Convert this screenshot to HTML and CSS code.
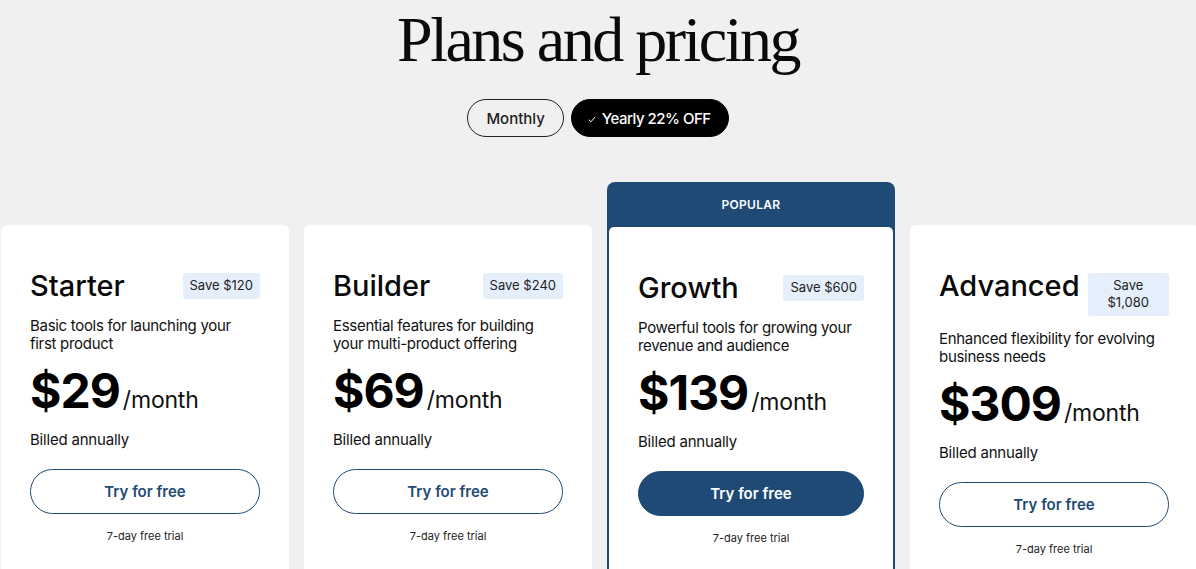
FILE: index.html
```html
<!DOCTYPE html>
<html lang="en">
<head>
<meta charset="utf-8">
<title>Plans and pricing</title>
<link rel="stylesheet" href="styles.css">
</head>
<body>
<main class="page">
  <h1 class="title">Plans and pricing</h1>
  <div class="toggle">
    <button class="toggle-btn">Monthly</button>
    <button class="toggle-btn active"><svg class="check" width="8" height="7" viewBox="0 0 8 7"><path d="M0.8 3.6 L2.9 5.8 L7.2 0.9" fill="none" stroke="#fff" stroke-width="1"/></svg>Yearly 22% OFF</button>
  </div>
  <div class="plans">
    <section class="plan">
      <div class="plan-body">
        <div class="plan-head"><h2>Starter</h2><span class="badge">Save $120</span></div>
        <p class="desc">Basic tools for launching your first product</p>
        <div class="price"><span class="amount">$29</span><span class="per">/month</span></div>
        <p class="billed">Billed annually</p>
        <a class="cta" href="#">Try for free</a>
        <p class="trial">7-day free trial</p>
      </div>
    </section>
    <section class="plan">
      <div class="plan-body">
        <div class="plan-head"><h2>Builder</h2><span class="badge">Save $240</span></div>
        <p class="desc">Essential features for building your multi-product offering</p>
        <div class="price"><span class="amount">$69</span><span class="per">/month</span></div>
        <p class="billed">Billed annually</p>
        <a class="cta" href="#">Try for free</a>
        <p class="trial">7-day free trial</p>
      </div>
    </section>
    <section class="plan popular">
      <div class="popular-tag">POPULAR</div>
      <div class="plan-body">
        <div class="plan-head"><h2>Growth</h2><span class="badge">Save $600</span></div>
        <p class="desc">Powerful tools for growing your revenue and audience</p>
        <div class="price"><span class="amount">$139</span><span class="per">/month</span></div>
        <p class="billed">Billed annually</p>
        <a class="cta" href="#">Try for free</a>
        <p class="trial">7-day free trial</p>
      </div>
    </section>
    <section class="plan">
      <div class="plan-body">
        <div class="plan-head"><h2>Advanced</h2><span class="badge">Save $1,080</span></div>
        <p class="desc">Enhanced flexibility for evolving business needs</p>
        <div class="price"><span class="amount">$309</span><span class="per">/month</span></div>
        <p class="billed">Billed annually</p>
        <a class="cta" href="#">Try for free</a>
        <p class="trial">7-day free trial</p>
      </div>
    </section>
  </div>
</main>
</body>
</html>
```
FILE: styles.css
```css
html, body {
  margin: 0;
  background: #f0f0f0;
  overflow: hidden;
}
body {
  font-family: Inter, "Noto Sans", sans-serif;
  color: #111;
}
.page {
  padding-top: 8px;
}
.title {
  margin: 0;
  text-align: center;
  font-family: "Liberation Serif", "Times New Roman", serif;
  font-weight: 400;
  font-size: 64px;
  line-height: 64px;
  letter-spacing: -2.5px;
  color: #0a0a0a;
}
.toggle {
  display: flex;
  justify-content: center;
  gap: 7px;
  margin-top: 27px;
}
.toggle-btn {
  height: 38px;
  border-radius: 19px;
  border: 1px solid #222;
  background: transparent;
  font-family: Inter, "Noto Sans", sans-serif;
  font-weight: 500;
  font-size: 15px;
  padding: 0 18px;
  color: #222;
  display: flex;
  align-items: center;
}
.toggle-btn.active {
  background: #000;
  color: #fff;
  border-color: #000;
  padding: 0 17px 0 16px;
  letter-spacing: -0.5px;
}
.check {
  margin-right: 6px;
  margin-top: 3px;
}
.plans {
  display: flex;
  gap: 15px;
  margin-top: 45px;
  margin-left: 1px;
  align-items: flex-start;
}
.plan {
  flex: 0 0 288px;
  width: 288px;
  margin-top: 43px;
  box-sizing: border-box;
}
.plan-body {
  background: #fff;
  border-radius: 6px;
  padding: 43px 29px 60px;
}
.popular {
  margin-top: 0;
  background: #1f4a76;
  border-radius: 8px 8px 0 0;
  padding: 0 2px;
}
.popular-tag {
  height: 45px;
  display: flex;
  align-items: center;
  justify-content: center;
  color: #fff;
  font-size: 12px;
  font-weight: 600;
  letter-spacing: 0.3px;
}
.popular .plan-body {
  border-radius: 5px 5px 0 0;
}
.plan-head {
  display: flex;
  justify-content: space-between;
  align-items: flex-start;
  gap: 8px;
}
.plan-head h2 {
  margin: 0;
  font-size: 29px;
  font-weight: 500;
  line-height: 35px;
  letter-spacing: 0;
  color: #0a0a0a;
}
.badge {
  margin-top: 5px;
  background: #e5effc;
  border-radius: 3px;
  padding: 4px 7px 5px;
  font-size: 13px;
  line-height: 17px;
  text-align: center;
  color: #222;
}
.desc {
  margin: 14px 0 0;
  font-size: 15px;
  line-height: 17.5px;
  letter-spacing: -0.3px;
  color: #111;
}
.price {
  margin-top: 11px;
  font-size: 48px;
  line-height: 55px;
  white-space: nowrap;
}
.amount {
  font-weight: 700;
  letter-spacing: -1px;
  color: #000;
}
.per {
  font-size: 23px;
  font-weight: 400;
  line-height: 1;
  margin-left: 3px;
  letter-spacing: -0.2px;
}
.billed {
  margin: 13px 0 0;
  font-size: 15px;
  line-height: 17.5px;
  letter-spacing: -0.2px;
}
.cta {
  display: flex;
  margin-top: 20px;
  height: 45px;
  border: 1px solid #1f4a76;
  border-radius: 23px;
  align-items: center;
  justify-content: center;
  color: #1f4a76;
  font-size: 15px;
  font-weight: 600;
  text-decoration: none;
  box-sizing: border-box;
}
.popular .cta {
  background: #1f4a76;
  color: #fff;
}
.trial {
  margin: 16px 0 0;
  text-align: center;
  font-size: 11px;
  line-height: 13px;
  color: #222;
}
```
